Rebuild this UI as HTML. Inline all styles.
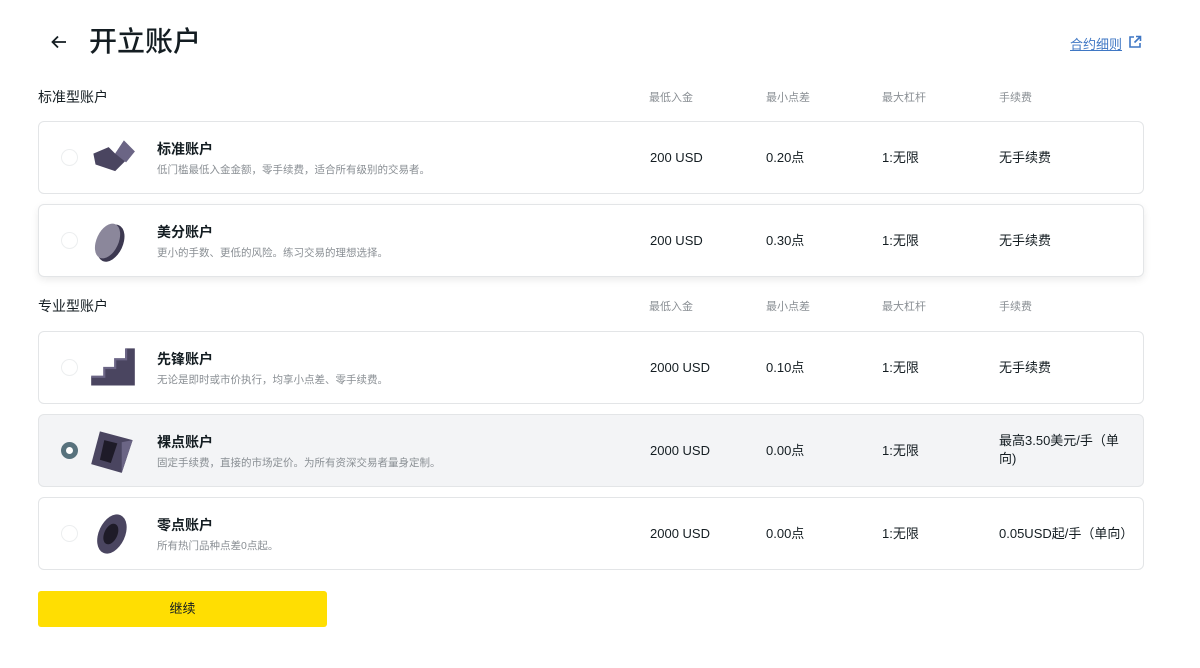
<!DOCTYPE html>
<html><head><meta charset="utf-8"><style>
*{box-sizing:border-box;margin:0;padding:0}
body{width:1200px;height:668px;background:#fff;font-family:"Liberation Sans","Noto Sans CJK SC",sans-serif;color:#141d22;position:relative;overflow:hidden}
.abs{position:absolute}
.title{left:89px;top:24px;font-size:28px;font-weight:500;line-height:36px}
.sec{font-size:14px;color:#141d22}
.hdr{font-size:11px;color:#8a8f94}
.card{position:absolute;left:38px;width:1106px;height:73px;border:1px solid #e3e5e7;border-radius:6px;background:#fff}
.card .radio{position:absolute;left:22px;top:27px;width:17px;height:17px;border-radius:50%;border:1px solid #eceeef}
.card .ic{position:absolute;left:50px;top:12px;width:48px;height:48px}
.card .nm{position:absolute;left:118px;top:17px;font-size:14px;font-weight:600;line-height:20px}
.card .ds{position:absolute;left:118px;top:40px;font-size:10.5px;color:#8a8f94;line-height:16px}
.card .c{position:absolute;top:26px;font-size:13px;line-height:20px}
.c1{left:611px}.c2{left:727px}.c3{left:843px}.c4{left:960px}
</style></head><body>
<svg class="abs" style="left:50px;top:33px" width="18" height="18" viewBox="0 0 18 18"><path d="M16 9H3M8 3.5L2.5 9 8 14.5" stroke="#141d22" stroke-width="1.8" fill="none"/></svg>
<div class="abs title">开立账户</div>
<div class="abs" style="left:1070px;top:34px;font-size:13px;color:#3f77c4;text-decoration:underline">合约细则</div>
<svg class="abs" style="left:1128px;top:35px" width="14" height="14" viewBox="0 0 14 14"><path d="M6 2H2v10h10V8M8 1.5h4.5V6M12.5 1.5L6.5 7.5" stroke="#3f77c4" stroke-width="1.6" fill="none"/></svg>

<div class="abs sec" style="left:38px;top:87px">标准型账户</div>
<div class="abs hdr" style="left:649px;top:89px">最低入金</div>
<div class="abs hdr" style="left:766px;top:89px">最小点差</div>
<div class="abs hdr" style="left:882px;top:89px">最大杠杆</div>
<div class="abs hdr" style="left:999px;top:89px">手续费</div>

<div class="card" style="top:121px"><div class="radio"></div>
<svg class="ic" viewBox="0 0 44 44"><path d="M4 18l14-6 6 6 8-12 10 10-18 18L6 28z" fill="#4a4560"/><path d="M24 18l8-12 10 10-8 10z" fill="#6b6585"/></svg>
<div class="nm">标准账户</div><div class="ds">低门槛最低入金金额，零手续费，适合所有级别的交易者。</div>
<div class="c c1">200 USD</div><div class="c c2">0.20点</div><div class="c c3">1:无限</div><div class="c c4">无手续费</div></div>

<div class="card" style="top:204px;box-shadow:0 3px 8px rgba(0,0,0,.08)"><div class="radio"></div>
<svg class="ic" viewBox="0 0 44 44"><ellipse cx="20" cy="24" rx="11" ry="18" transform="rotate(25 20 24)" fill="#3c3850"/><ellipse cx="17" cy="22" rx="10" ry="17" transform="rotate(25 17 22)" fill="#8b879b"/></svg>
<div class="nm">美分账户</div><div class="ds">更小的手数、更低的风险。练习交易的理想选择。</div>
<div class="c c1">200 USD</div><div class="c c2">0.30点</div><div class="c c3">1:无限</div><div class="c c4">无手续费</div></div>

<div class="abs sec" style="left:38px;top:296px">专业型账户</div>
<div class="abs hdr" style="left:649px;top:298px">最低入金</div>
<div class="abs hdr" style="left:766px;top:298px">最小点差</div>
<div class="abs hdr" style="left:882px;top:298px">最大杠杆</div>
<div class="abs hdr" style="left:999px;top:298px">手续费</div>

<div class="card" style="top:331px"><div class="radio"></div>
<svg class="ic" viewBox="0 0 44 44"><path d="M2 30h12v-8h10v-8h10V4h8v34H2z" fill="#4a4560"/><path d="M2 30h12v-8h10v-8h10V4" stroke="#6b6585" stroke-width="2" fill="none"/></svg>
<div class="nm">先锋账户</div><div class="ds">无论是即时或市价执行，均享小点差、零手续费。</div>
<div class="c c1">2000 USD</div><div class="c c2">0.10点</div><div class="c c3">1:无限</div><div class="c c4">无手续费</div></div>

<div class="card" style="top:414px;background:#f3f4f6"><div class="radio" style="border:5px solid #58727d;background:#fff"></div>
<svg class="ic" viewBox="0 0 44 44"><path d="M10 4l30 8-10 30-28-8z" fill="#4a4560"/><path d="M14 12l12 3-6 18-10-3z" fill="#1e1b28"/><path d="M30 14l10-2-10 30z" fill="#6b6585"/></svg>
<div class="nm">裸点账户</div><div class="ds">固定手续费，直接的市场定价。为所有资深交易者量身定制。</div>
<div class="c c1">2000 USD</div><div class="c c2">0.00点</div><div class="c c3">1:无限</div><div class="c c4" style="top:17px;line-height:18px">最高3.50美元/手（单<br>向)</div></div>

<div class="card" style="top:497px"><div class="radio"></div>
<svg class="ic" viewBox="0 0 44 44"><ellipse cx="21" cy="22" rx="12" ry="19" transform="rotate(25 21 22)" fill="#4a4560"/><ellipse cx="20" cy="22" rx="6" ry="10" transform="rotate(25 20 22)" fill="#1e1b28"/></svg>
<div class="nm">零点账户</div><div class="ds">所有热门品种点差0点起。</div>
<div class="c c1">2000 USD</div><div class="c c2">0.00点</div><div class="c c3">1:无限</div><div class="c c4">0.05USD起/手（单向）</div></div>

<div class="abs" style="left:38px;top:591px;width:289px;height:36px;background:#ffde02;border-radius:3px;text-align:center;line-height:36px;font-size:13px">继续</div>
</body></html>
